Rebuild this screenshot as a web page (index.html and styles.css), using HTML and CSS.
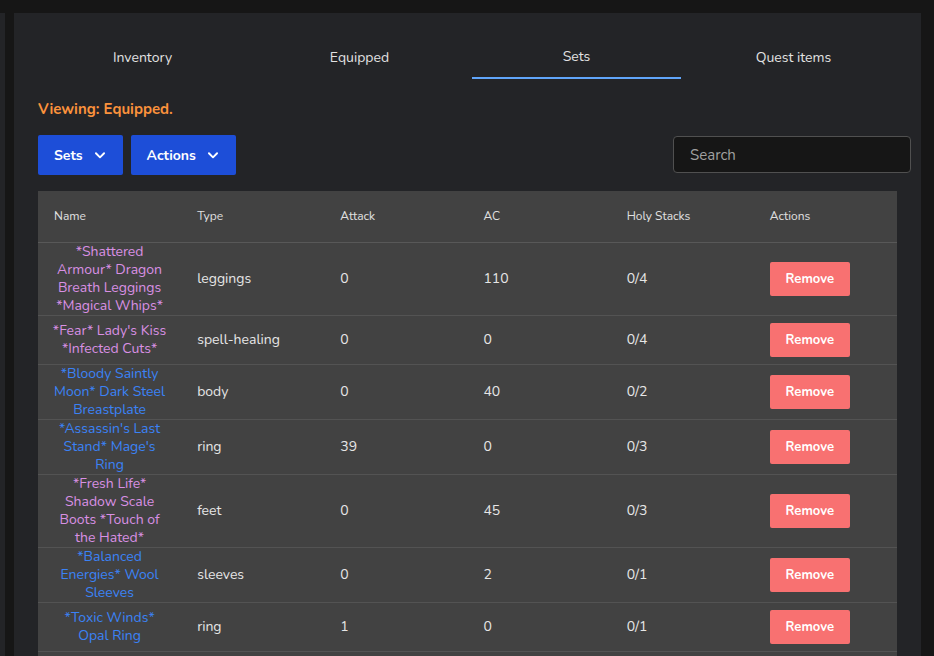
FILE: index.html
```html
<!DOCTYPE html>
<html>
<head>
<meta charset="utf-8">
<link rel="stylesheet" href="styles.css">
</head>
<body>
<div class="layout">
  <div class="sidebar"></div>
  <main class="panel">
    <nav class="tabs">
      <div class="tab">Inventory</div>
      <div class="tab">Equipped</div>
      <div class="tab active">Sets</div>
      <div class="tab">Quest items</div>
    </nav>
    <section class="content">
      <div class="viewing">Viewing: Equipped.</div>
      <div class="toolbar">
        <div class="btn-group">
          <button class="btn-primary">Sets
            <svg class="chev" viewBox="0 0 24 24" width="14" height="14"><path d="M5 9l7 7 7-7" fill="none" stroke="#fff" stroke-width="3.2" stroke-linecap="round" stroke-linejoin="round"/></svg>
          </button>
          <button class="btn-primary">Actions
            <svg class="chev" viewBox="0 0 24 24" width="14" height="14"><path d="M5 9l7 7 7-7" fill="none" stroke="#fff" stroke-width="3.2" stroke-linecap="round" stroke-linejoin="round"/></svg>
          </button>
        </div>
        <input class="search" type="text" placeholder="Search">
      </div>
      <table class="items">
        <thead>
          <tr><th>Name</th><th>Type</th><th>Attack</th><th>AC</th><th>Holy Stacks</th><th>Actions</th></tr>
        </thead>
        <tbody>
          <tr><td class="name pink">*Shattered Armour* Dragon Breath Leggings *Magical Whips*</td><td>leggings</td><td>0</td><td>110</td><td>0/4</td><td><button class="btn-remove">Remove</button></td></tr>
          <tr><td class="name pink">*Fear* Lady's Kiss *Infected Cuts*</td><td>spell-healing</td><td>0</td><td>0</td><td>0/4</td><td><button class="btn-remove">Remove</button></td></tr>
          <tr><td class="name blue">*Bloody Saintly Moon* Dark Steel Breastplate</td><td>body</td><td>0</td><td>40</td><td>0/2</td><td><button class="btn-remove">Remove</button></td></tr>
          <tr><td class="name blue">*Assassin's Last Stand* Mage's Ring</td><td>ring</td><td>39</td><td>0</td><td>0/3</td><td><button class="btn-remove">Remove</button></td></tr>
          <tr><td class="name pink">*Fresh Life* Shadow Scale Boots *Touch of the Hated*</td><td>feet</td><td>0</td><td>45</td><td>0/3</td><td><button class="btn-remove">Remove</button></td></tr>
          <tr><td class="name blue">*Balanced Energies* Wool Sleeves</td><td>sleeves</td><td>0</td><td>2</td><td>0/1</td><td><button class="btn-remove">Remove</button></td></tr>
          <tr><td class="name blue">*Toxic Winds* Opal Ring</td><td>ring</td><td>1</td><td>0</td><td>0/1</td><td><button class="btn-remove">Remove</button></td></tr>
          <tr><td class="name pink">*Ocean Depths* Silver Amulet</td><td>necklace</td><td>0</td><td>5</td><td>0/2</td><td><button class="btn-remove">Remove</button></td></tr>
        </tbody>
      </table>
    </section>
  </main>
</div>
</body>
</html>
```

FILE: styles.css
```css
* { box-sizing: border-box; }
html, body { margin: 0; padding: 0; }
body {
  background: #161616;
  font-family: "Nunito", "Lato", "Noto Sans", sans-serif;
  color: #e4e4e4;
}
.layout {
  display: flex;
  gap: 9px;
  padding-top: 13px;
  width: 921px;
}
.sidebar {
  width: 5px;
  background: #232427;
}
.panel {
  flex: 1;
  background: #232427;
  padding-top: 24px;
  padding-bottom: 20px;
}
.tabs {
  display: flex;
  margin: 0 19px 0 20px;
}
.tab {
  flex: 1;
  text-align: center;
  font-size: 14px;
  line-height: 20px;
  color: #e2e2e2;
  padding: 11px 0 9px;
  margin: 0 4px;
  border-bottom: 2px solid transparent;
}
.tab.active {
  border-bottom-color: #60a5fa;
  padding: 10px 0 10px;
}
.content {
  padding: 0 24px;
}
.viewing {
  margin-top: 21px;
  color: #fb923c;
  font-weight: 700;
  font-size: 15px;
  line-height: 18px;
}
.toolbar {
  display: flex;
  justify-content: space-between;
  align-items: flex-start;
  margin-top: 17px;
  margin-right: -14px;
}
.btn-group {
  display: flex;
  gap: 8px;
}
.btn-primary {
  display: flex;
  align-items: center;
  gap: 10px;
  height: 40px;
  padding: 0 16px 0 16px;
  background: #1d4ed8;
  border: none;
  border-radius: 2px;
  color: #fff;
  font-family: inherit;
  font-size: 14px;
  font-weight: 700;
}
.chev { display: block; }
.search {
  margin-top: 1px;
  width: 238px;
  height: 37px;
  background: #161616;
  border: 1px solid #505050;
  border-radius: 4px;
  padding: 0 16px;
  font-family: inherit;
  font-size: 15px;
  color: #ddd;
}
.search::placeholder { color: #a0a0a0; }
.items {
  margin-top: 16px;
  width: 859px;
  border-collapse: collapse;
  background: #424242;
  table-layout: fixed;
}
.items th {
  text-align: left;
  font-weight: 400;
  font-size: 12px;
  color: #e0e0e0;
  height: 51px;
  padding: 0 16px;
  border-bottom: 1px solid #585858;
}
.items td {
  font-size: 14px;
  line-height: 18px;
  padding: 0 16px;
  border-bottom: 1px solid #535353;
  color: #e6e6e6;
}
.items td.name {
  text-align: center;
  padding: 0 13px;
}
.items td.pink { color: #d990e4; }
.items td.blue { color: #3b82f6; }
.btn-remove {
  display: block;
  margin: 7px 0;
  width: 80px;
  height: 34px;
  background: #f87171;
  border: none;
  border-radius: 2px;
  color: #fff;
  font-family: inherit;
  font-weight: 700;
  font-size: 13px;
}
```
